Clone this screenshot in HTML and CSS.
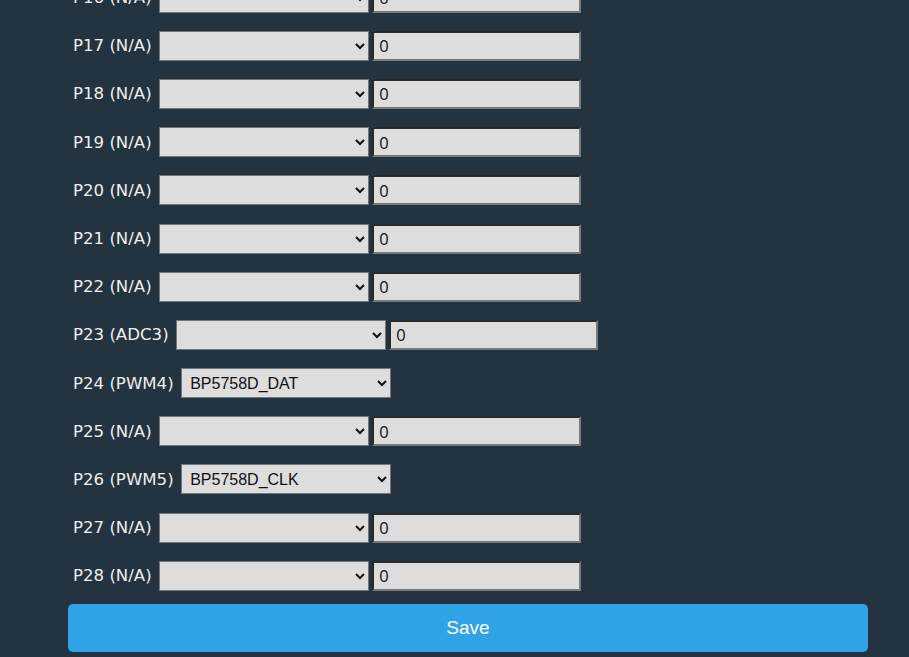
FILE: index.html
```html
<!DOCTYPE html>
<html>
<head>
<meta charset="utf-8">
<link rel="stylesheet" href="styles.css">
</head>
<body>
<div class="main">
  <form class="pins">
    <div class="row"><label>P16 (N/A)</label><select class="sel"><option></option></select><input class="num" value="0"></div>
    <div class="row"><label>P17 (N/A)</label><select class="sel"><option></option></select><input class="num" value="0"></div>
    <div class="row"><label>P18 (N/A)</label><select class="sel"><option></option></select><input class="num" value="0"></div>
    <div class="row"><label>P19 (N/A)</label><select class="sel"><option></option></select><input class="num" value="0"></div>
    <div class="row"><label>P20 (N/A)</label><select class="sel"><option></option></select><input class="num" value="0"></div>
    <div class="row"><label>P21 (N/A)</label><select class="sel"><option></option></select><input class="num" value="0"></div>
    <div class="row"><label>P22 (N/A)</label><select class="sel"><option></option></select><input class="num" value="0"></div>
    <div class="row"><label>P23 (ADC3)</label><select class="sel"><option></option></select><input class="num" value="0"></div>
    <div class="row"><label>P24 (PWM4)</label><select class="sel"><option>BP5758D_DAT</option></select></div>
    <div class="row"><label>P25 (N/A)</label><select class="sel"><option></option></select><input class="num" value="0"></div>
    <div class="row"><label>P26 (PWM5)</label><select class="sel"><option>BP5758D_CLK</option></select></div>
    <div class="row"><label>P27 (N/A)</label><select class="sel"><option></option></select><input class="num" value="0"></div>
    <div class="row"><label>P28 (N/A)</label><select class="sel"><option></option></select><input class="num" value="0"></div>
    <button type="button" class="save">Save</button>
  </form>
</div>
</body>
</html>
```
FILE: styles.css
```css
html, body {
  margin: 0;
  padding: 0;
  background: #233340;
  overflow: hidden;
}
body {
  font-family: "DejaVu Sans", "Open Sans", sans-serif;
  color: #eeeeee;
}
.main {
  width: 800px;
  margin-left: 68px;
}
.pins {
  margin-top: -26.5px;
}
.row {
  height: 48.2px;
  display: flex;
  align-items: center;
  padding-left: 5px;
}
.row label {
  font-size: 16.6px;
  margin-right: 7.5px;
  white-space: nowrap;
}
.sel {
  width: 210px;
  height: 30px;
  background: #dddddd;
  border: 1px solid #767676;
  border-radius: 0;
  font-family: "Liberation Sans", Arial, sans-serif;
  font-size: 16px;
  color: #111;
  padding: 0 0 0 4px;
  margin: 0 3px 0 0;
}
.num {
  box-sizing: border-box;
  width: 209px;
  height: 30px;
  background: #dddddd;
  border-style: solid;
  border-width: 2px;
  border-color: #2a2a2a #7a7a7a #7a7a7a #2a2a2a;
  font-family: "Open Sans", "Noto Sans", sans-serif;
  font-size: 16.5px;
  color: #111;
  padding: 0 5px;
  margin: 0;
}
.save {
  display: block;
  width: 800px;
  height: 48px;
  margin-top: 4px;
  background: #2fa3e6;
  border: none;
  border-radius: 5px;
  color: #ffffff;
  font-family: "Liberation Sans", Arial, sans-serif;
  font-size: 19px;
  cursor: pointer;
}
```
